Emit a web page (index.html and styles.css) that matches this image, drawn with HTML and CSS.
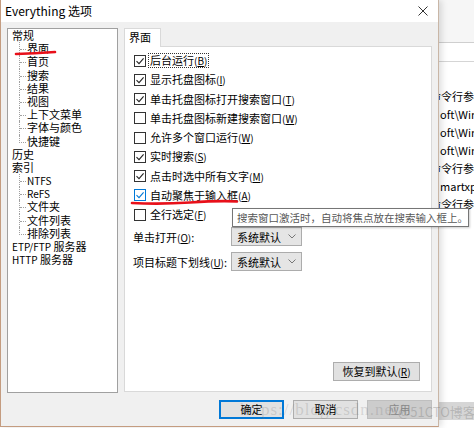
FILE: index.html
```html
<!DOCTYPE html>
<html lang="zh-CN">
<head>
<meta charset="utf-8">
<title>Everything 选项</title>
<link rel="stylesheet" href="styles.css">
</head>
<body>
<div class="screen">
  <div class="window">
    <div class="titlebar">
      <span class="title">Everything 选项</span>
      <svg class="close" viewBox="0 0 10 10"><path d="M0.5 0.5 L9.5 9.5 M9.5 0.5 L0.5 9.5" stroke="#333" stroke-width="1" fill="none"/></svg>
    </div>
    <div class="main">
      <div class="tree">
        <div class="row top">常规</div>
        <div class="row child"><span class="twig"></span><span class="txt">界面</span></div>
        <div class="row child"><span class="twig"></span><span class="txt">首页</span></div>
        <div class="row child"><span class="twig"></span><span class="txt">搜索</span></div>
        <div class="row child"><span class="twig"></span><span class="txt">结果</span></div>
        <div class="row child"><span class="twig"></span><span class="txt">视图</span></div>
        <div class="row child"><span class="twig"></span><span class="txt">上下文菜单</span></div>
        <div class="row child"><span class="twig"></span><span class="txt">字体与颜色</span></div>
        <div class="row child last"><span class="twig"></span><span class="txt">快捷键</span></div>
        <div class="row top">历史</div>
        <div class="row top">索引</div>
        <div class="row child"><span class="twig"></span><span class="txt latin">NTFS</span></div>
        <div class="row child"><span class="twig"></span><span class="txt latin">ReFS</span></div>
        <div class="row child"><span class="twig"></span><span class="txt">文件夹</span></div>
        <div class="row child"><span class="twig"></span><span class="txt">文件列表</span></div>
        <div class="row child last"><span class="twig"></span><span class="txt">排除列表</span></div>
        <div class="row top"><span><span class="latin">ETP/FTP</span> 服务器</span></div>
        <div class="row top"><span><span class="latin">HTTP</span> 服务器</span></div>
      </div>
      <div class="right">
        <div class="tabbar"><div class="tab">界面</div></div>
        <div class="panel">
          <div class="opt"><span class="cb"><svg viewBox="0 0 10 10"><path d="M1.5 5.2 L4 7.6 L8.6 2.4" stroke="#222" stroke-width="1.1" fill="none"/></svg></span><span class="lbl focus">后台运行<span class="mn">(<u>B</u>)</span></span></div>
          <div class="opt"><span class="cb"><svg viewBox="0 0 10 10"><path d="M1.5 5.2 L4 7.6 L8.6 2.4" stroke="#222" stroke-width="1.1" fill="none"/></svg></span><span class="lbl">显示托盘图标<span class="mn">(<u>I</u>)</span></span></div>
          <div class="opt"><span class="cb"><svg viewBox="0 0 10 10"><path d="M1.5 5.2 L4 7.6 L8.6 2.4" stroke="#222" stroke-width="1.1" fill="none"/></svg></span><span class="lbl">单击托盘图标打开搜索窗口<span class="mn">(<u>T</u>)</span></span></div>
          <div class="opt"><span class="cb"></span><span class="lbl">单击托盘图标新建搜索窗口<span class="mn">(<u>W</u>)</span></span></div>
          <div class="opt"><span class="cb"></span><span class="lbl">允许多个窗口运行<span class="mn">(<u>W</u>)</span></span></div>
          <div class="opt"><span class="cb"><svg viewBox="0 0 10 10"><path d="M1.5 5.2 L4 7.6 L8.6 2.4" stroke="#222" stroke-width="1.1" fill="none"/></svg></span><span class="lbl">实时搜索<span class="mn">(<u>S</u>)</span></span></div>
          <div class="opt"><span class="cb"><svg viewBox="0 0 10 10"><path d="M1.5 5.2 L4 7.6 L8.6 2.4" stroke="#222" stroke-width="1.1" fill="none"/></svg></span><span class="lbl">点击时选中所有文字<span class="mn">(<u>M</u>)</span></span></div>
          <div class="opt"><span class="cb hover"><svg viewBox="0 0 10 10"><path d="M1.5 5.2 L4 7.6 L8.6 2.4" stroke="#0078d7" stroke-width="1.1" fill="none"/></svg></span><span class="lbl">自动聚焦于输入框<span class="mn">(<u>A</u>)</span></span></div>
          <div class="opt"><span class="cb"></span><span class="lbl">全行选定<span class="mn">(<u>F</u>)</span></span></div>
          <div class="field first"><span class="flbl">单击打开<span class="mn">(<u>O</u>)</span>:</span><span class="combo"><span>系统默认</span><svg class="chev" viewBox="0 0 8 5"><path d="M0.5 0.5 L4 4 L7.5 0.5" stroke="#777" stroke-width="1" fill="none"/></svg></span></div>
          <div class="field"><span class="flbl">项目标题下划线<span class="mn">(<u>U</u>)</span>:</span><span class="combo"><span>系统默认</span><svg class="chev" viewBox="0 0 8 5"><path d="M0.5 0.5 L4 4 L7.5 0.5" stroke="#777" stroke-width="1" fill="none"/></svg></span></div>
          <button class="btn restore">恢复到默认<span class="mn">(<u>R</u>)</span></button>
        </div>
      </div>
    </div>
    <div class="footer">
      <button class="btn default">确定</button>
      <button class="btn">取消</button>
      <button class="btn disabled">应用</button>
    </div>
  </div>
  <div class="bgapp">
    <div class="bg-top"></div>
    <div class="bg-head"></div>
    <div class="bg-rows">
      <div class="bg-row cut">命令行参数</div>
      <div class="bg-row">oft\Windows</div>
      <div class="bg-row">oft\Windows</div>
      <div class="bg-row">oft\Windows</div>
      <div class="bg-row cut">命令行参数</div>
      <div class="bg-row">martxp</div>
      <div class="bg-row cut">命令行参数</div>
    </div>
    <div class="bg-band"></div>
  </div>

  <div class="tooltip">搜索窗口激活时，自动将焦点放在搜索输入框上。</div>
  <svg class="marks" viewBox="0 0 474 428">
    <path d="M16 54 Q34 53.5 55 52" stroke="#e8101a" stroke-width="2.6" stroke-linecap="round" fill="none"/>
    <path d="M132 203 Q160 204.5 190 202.5 T237 201.5" stroke="#e8101a" stroke-width="2.6" stroke-linecap="round" fill="none"/>
  </svg>
  <div class="wm wm1">https://blog.csdn.net/</div>
  <div class="wm wm2">@51CTO博客</div>
</div>
</body>
</html>
```
FILE: styles.css
```css
* { box-sizing: border-box; }
html, body { margin: 0; padding: 0; }
body {
  width: 474px;
  height: 428px;
  overflow: hidden;
  background: #fff;
  font-family: "Noto Sans CJK SC", "Noto Sans", sans-serif;
  font-size: 11px;
  color: #000;
}
.screen {
  position: relative;
  width: 474px;
  height: 428px;
  display: flex;
  background: #fff;
  overflow: hidden;
}
.window {
  position: relative;
  z-index: 1;
  width: 439px;
  height: 427px;
  flex: none;
  display: flex;
  flex-direction: column;
  background: #f0f0f0;
  border-left: 1px solid #c49c80;
  border-right: 1px solid #c9b6a6;
  border-bottom: 1px solid #c49c80;
  box-shadow: 3px 0 6px rgba(0, 0, 0, 0.12);
}
.titlebar {
  height: 22px;
  flex: none;
  background: #fff;
  display: flex;
  align-items: center;
  justify-content: space-between;
  padding: 0 10px 0 4px;
}
.title { font-size: 12px; line-height: 22px; color: #000; }
.close { width: 10px; height: 10px; display: block; }

.main {
  height: 371px;
  flex: none;
  display: flex;
  gap: 6px;
  padding: 6px 6px 0 6px;
}
.tree {
  width: 111px;
  height: 365px;
  flex: none;
  background: #fff;
  border: 1px solid #a0a0a0;
  line-height: 13.2px;
  font-size: 11px;
  white-space: nowrap;
}
.row { height: 13.2px; display: flex; align-items: stretch; }
.row.top { padding-left: 4px; }
.row.child { padding-left: 11px; }
.twig {
  width: 7px;
  flex: none;
  display: flex;
  flex-direction: column;
  border-left: 1px dotted #a0a0a0;
}
.twig::before {
  content: "";
  height: 7px;
  border-bottom: 1px dotted #a0a0a0;
}
.row.last .twig { border-left: none; }
.row.last .twig::before { border-left: 1px dotted #a0a0a0; }
.txt { padding-left: 1px; }
.latin { font-size: 10px; }

.right {
  width: 308px;
  flex: none;
  display: flex;
  flex-direction: column;
  padding-bottom: 1px;
}
.tabbar { height: 18px; flex: none; display: flex; }
.tab {
  position: relative;
  z-index: 1;
  width: 37px;
  height: 19px;
  background: #fff;
  border: 1px solid #d9d9d9;
  border-bottom: none;
  padding-left: 4px;
  line-height: 17px;
  font-size: 11px;
}
.panel {
  flex: 1;
  display: flex;
  flex-direction: column;
  background: #fff;
  border: 1px solid #d9d9d9;
  padding: 4px 0 0 9px;
}
.opt {
  height: 19.25px;
  display: flex;
  align-items: center;
  gap: 2px;
  white-space: nowrap;
}
.cb {
  width: 12px;
  height: 12px;
  flex: none;
  border: 1px solid #333;
  background: #fff;
  display: flex;
  align-items: center;
  justify-content: center;
}
.cb svg { width: 10px; height: 10px; display: block; }
.cb.hover { border-color: #0078d7; }
.lbl { line-height: 12px; padding: 0 1px; border: 1px solid transparent; }
.lbl.focus { border: 1px dotted #333; }
.mn { font-size: 10px; }
.mn u { text-decoration: underline; text-underline-offset: 1px; }

.field {
  height: 19px;
  margin-top: 6px;
  margin-left: -1px;
  display: flex;
  align-items: center;
  white-space: nowrap;
}
.field.first { margin-top: 2.75px; }
.flbl { width: 98px; flex: none; }
.combo {
  width: 71px;
  height: 19px;
  background: #e5e5e5;
  border: 1px solid #acacac;
  display: flex;
  align-items: center;
  justify-content: space-between;
  padding: 0 5px 0 5px;
}
.chev { width: 8px; height: 5px; display: block; }

.btn {
  font-family: "Noto Sans CJK SC", "Noto Sans", sans-serif;
  font-size: 11px;
  color: #000;
  background: #e1e1e1;
  border: 1px solid #adadad;
  height: 19px;
  padding: 0;
  margin: 0;
  line-height: 17px;
}
.restore {
  width: 87px;
  margin-top: auto;
  margin-right: 11px;
  margin-bottom: 10px;
  align-self: flex-end;
}
.footer {
  flex: 1;
  display: flex;
  justify-content: flex-end;
  align-items: flex-start;
  gap: 9px;
  padding: 7px 6px 0 0;
}
.footer .btn { width: 65px; }
.btn.default { border-color: #0078d7; box-shadow: inset 0 0 0 1px #0078d7; }
.btn.disabled { background: #cccccc; border-color: #bfbfbf; color: #8a8a8a; }

.bgapp {
  flex: 1;
  display: flex;
  flex-direction: column;
  background: #fff;
  overflow: hidden;
  white-space: nowrap;
}
.bg-top { height: 43px; flex: none; background: #f6f6f6; border-bottom: 1px solid #cfcfcf; }
.bg-head { height: 19px; flex: none; background: #fff; border-bottom: 1px solid #d5d5d5; }
.bg-rows { padding-top: 25px; }
.bg-row { height: 18px; line-height: 18px; font-size: 11px; padding-left: 1px; }
.bg-row.cut { margin-left: -10px; }
.bg-band { margin-top: auto; margin-bottom: 8px; height: 18px; background: #d6d6d6; }

.tooltip {
  position: absolute;
  left: 232px;
  top: 208px;
  z-index: 3;
  width: 237px;
  height: 19px;
  background: #fff;
  border: 1px solid #767676;
  color: #575757;
  font-size: 10.5px;
  line-height: 17px;
  padding-left: 4px;
  white-space: nowrap;
  box-shadow: 1px 1px 2px rgba(0, 0, 0, 0.2);
}
.marks {
  position: absolute;
  left: 0;
  top: 0;
  width: 474px;
  height: 428px;
  z-index: 4;
  pointer-events: none;
}
.wm {
  position: absolute;
  z-index: 5;
  color: rgba(110, 110, 110, 0.22);
  white-space: nowrap;
  font-family: "Liberation Serif", serif;
}
.wm1 { left: 240px; top: 400px; font-size: 17px; letter-spacing: 1px; }
.wm2 { left: 398px; top: 402px; font-size: 13px; font-family: "Noto Sans CJK SC", sans-serif; color: rgba(120, 120, 120, 0.35); }
```
